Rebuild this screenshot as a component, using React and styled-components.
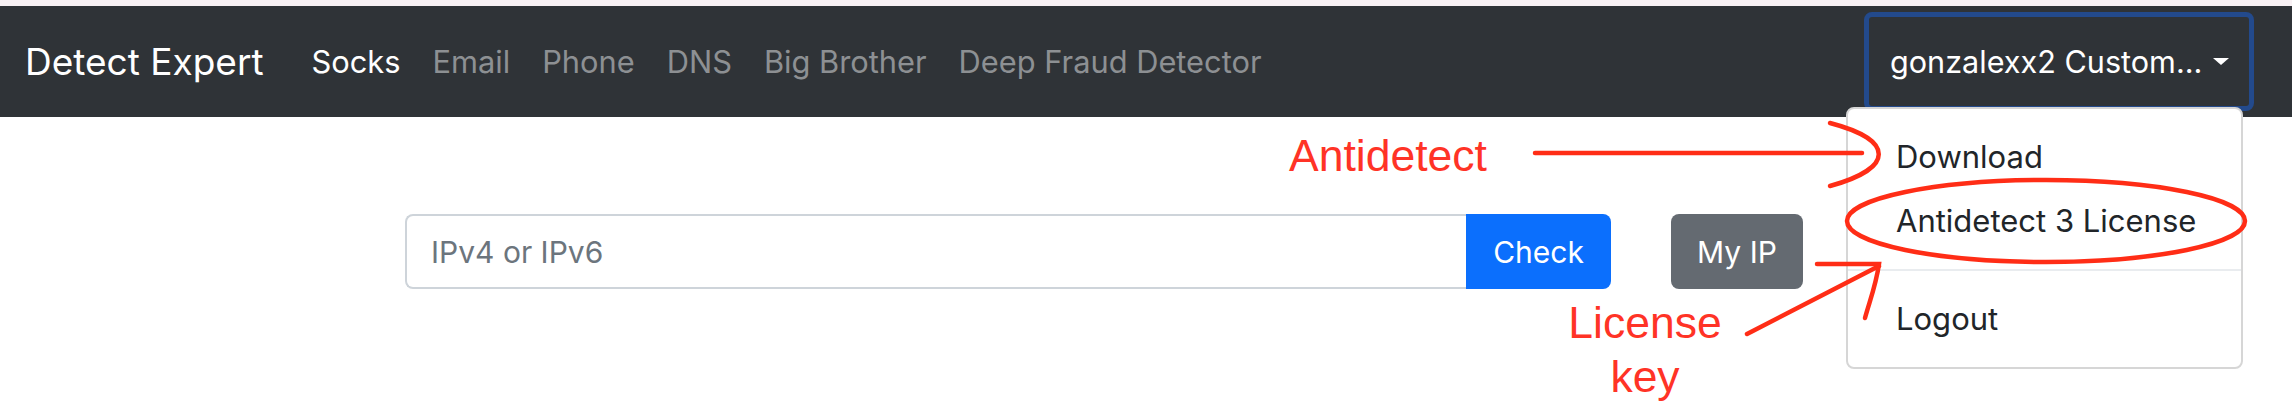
import React from "react"
import styled, { createGlobalStyle } from "styled-components"

// ------------------------------------------------
// GLOBAL
// ------------------------------------------------

const GlobalStyle = createGlobalStyle`
  html, body {
    margin: 0;
    padding: 0;
    background: #fff;
  }
  body {
    font-family: Inter, "Liberation Sans", sans-serif;
    -webkit-font-smoothing: antialiased;
  }
  * {
    box-sizing: border-box;
  }
`

const Page = styled.div`
  position: relative;
  width: 2292px;
  height: 414px;
  overflow: hidden;
  background: #fff;
`

const TopStrip = styled.div`
  height: 6px;
  background: #f8f1f4;
`

// ------------------------------------------------
// NAVBAR
// ------------------------------------------------

const Navbar = styled.nav`
  height: 111px;
  display: flex;
  align-items: center;
  padding: 0 38px 0 25px;
  background: #2f3337;
`

const Brand = styled.a`
  font-size: 37px;
  line-height: 48px;
  color: #fff;
  margin-right: 32px;
  white-space: nowrap;
`

const NavList = styled.div`
  display: flex;
`

const NavLink = styled.a`
  padding: 0 16px;
  font-size: 30.8px;
  line-height: 48px;
  white-space: nowrap;
  color: ${p => (p.$active ? "#fff" : "#8d9093")};
`

const UserMenu = styled.div`
  position: relative;
  margin-left: auto;
`

const Toggle = styled.button`
  display: flex;
  align-items: center;
  height: 99px;
  width: 390px;
  padding: 0 22px 0 21px;
  border: 5px solid #234a8c;
  border-radius: 8px;
  background: transparent;
  color: #fff;
  font: inherit;
  font-size: 30.6px;
  white-space: nowrap;

  &::after {
    content: "";
    margin-left: 11px;
    border-top: 7px solid #fff;
    border-left: 8px solid transparent;
    border-right: 8px solid transparent;
  }
`

const Menu = styled.div`
  position: absolute;
  top: 95px;
  right: 11px;
  width: 397px;
  padding: 16px 0;
  background: #fff;
  border: 2px solid #d6d6d6;
  border-radius: 8px;
  z-index: 5;
`

const MenuItem = styled.a`
  display: block;
  padding: 8px 48px;
  font-size: 31px;
  line-height: 48px;
  color: #212529;
  white-space: nowrap;
`

const Divider = styled.div`
  height: 2px;
  margin: 16px 0;
  background: #e9ecef;
`

// ------------------------------------------------
// SEARCH ROW
// ------------------------------------------------

const Main = styled.main`
  display: flex;
  align-items: center;
  gap: 60px;
  padding: 97px 0 0 405px;
`

const InputGroup = styled.div`
  display: flex;
  width: 1206px;
`

const Input = styled.input`
  flex: 1;
  min-width: 0;
  height: 75px;
  padding: 0 24px;
  border: 2px solid #ced4da;
  border-right: none;
  border-radius: 8px 0 0 8px;
  font: inherit;
  font-size: 30px;
  color: #495057;
  outline: none;

  &::placeholder {
    color: #6c757d;
  }
`

const Button = styled.button`
  width: ${p => p.$width}px;
  height: 75px;
  padding: 0;
  border: none;
  border-radius: ${p => (p.$attached ? "0 8px 8px 0" : "8px")};
  background: ${p => (p.$variant === "primary" ? "#0b6ffd" : "#646a71")};
  color: #fff;
  font: inherit;
  font-size: 30px;
`

// ------------------------------------------------
// ANNOTATIONS
// ------------------------------------------------

const Marks = styled.svg`
  position: absolute;
  top: 0;
  left: 0;
  z-index: 10;
  pointer-events: none;
`

const Note = styled.div`
  position: absolute;
  top: ${p => p.$top}px;
  left: ${p => p.$left}px;
  width: ${p => p.$width}px;
  font-family: "Liberation Sans", Arial, sans-serif;
  font-size: 44.5px;
  line-height: 54px;
  text-align: ${p => p.$align || "left"};
  color: #ff3326;
  z-index: 10;
`

const RED = "#ff2d16"

const Annotations = () => (
  <>
    <Note $top={129} $left={1289} $width={220}>Antidetect</Note>
    <Note $top={296} $left={1545} $width={200} $align="center">
      License
      <br />
      key
    </Note>
    <Marks width="2292" height="414" viewBox="0 0 2292 414">
      <g fill="none" stroke={RED} strokeWidth="4.5" strokeLinecap="round">
        <path d="M1535 153 H1862" />
        <path d="M1830 123 C1895 140 1895 168 1830 186" />
        <ellipse cx="2046" cy="221" rx="199" ry="41" />
        <path d="M1747 334 L1879 266" />
        <path d="M1817 264 L1879 264 C1876 285 1870 300 1865 318" />
      </g>
    </Marks>
  </>
)

// ------------------------------------------------
// APP
// ------------------------------------------------

const links = ["Socks", "Email", "Phone", "DNS", "Big Brother", "Deep Fraud Detector"]

const App = () => {
  return (
    <Page>
      <GlobalStyle />
      <TopStrip />
      <Navbar>
        <Brand>Detect Expert</Brand>
        <NavList>
          {links.map((l, i) => (
            <NavLink key={l} $active={i === 0}>
              {l}
            </NavLink>
          ))}
        </NavList>
        <UserMenu>
          <Toggle>gonzalexx2 Custom...</Toggle>
          <Menu>
            <MenuItem>Download</MenuItem>
            <MenuItem>Antidetect 3 License</MenuItem>
            <Divider />
            <MenuItem>Logout</MenuItem>
          </Menu>
        </UserMenu>
      </Navbar>
      <Main>
        <InputGroup>
          <Input placeholder="IPv4 or IPv6" />
          <Button $variant="primary" $attached $width={145}>
            Check
          </Button>
        </InputGroup>
        <Button $width={132}>My IP</Button>
      </Main>
      <Annotations />
    </Page>
  )
}

export default App
